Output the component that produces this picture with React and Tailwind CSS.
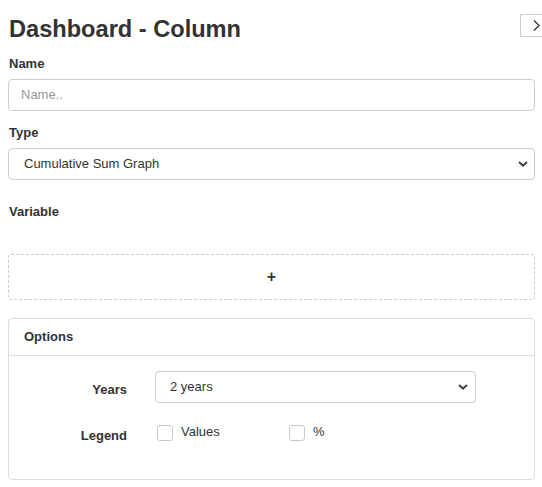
import React from "react";

function Chevron() {
  return (
    <svg width="10" height="6" viewBox="0 0 10 6" className="shrink-0">
      <path d="M1 1 L5 4.6 L9 1" fill="none" stroke="#444" strokeWidth="2" />
    </svg>
  );
}

function Checkbox() {
  return <span className="inline-block w-[16px] h-[16px] border border-[#c8c8c8] rounded-[3px] bg-white" />;
}

export default function App() {
  return (
    <div className="w-[542px] h-[487px] bg-white text-[#333] overflow-hidden relative" style={{ fontFamily: '"Liberation Sans", Arial, sans-serif' }}>
      <button className="absolute left-[520px] top-[14px] w-[30px] h-[23px] border border-[#ccc] bg-white flex items-center pl-[12px]">
        <svg width="7" height="11" viewBox="0 0 7 11">
          <path d="M1 0.5 L6 5.5 L1 10.5" fill="none" stroke="#333" strokeWidth="1.3" />
        </svg>
      </button>
      <div className="pl-[8px] pr-[7px]">
        <h1 className="text-[23.6px] font-bold leading-[28px] pt-[15px] pl-[1px] text-[#333]">Dashboard - Column</h1>

        <div className="mt-[13px] text-[13px] font-bold leading-[15px] pl-[1px]">Name</div>
        <div className="mt-[8px] h-[32px] border border-[#ccc] rounded-[4px] flex items-center pl-[12px] text-[13px] text-[#999]">Name..</div>

        <div className="mt-[14px] text-[13px] font-bold leading-[15px] pl-[1px]">Type</div>
        <div className="mt-[8px] h-[32px] border border-[#ccc] rounded-[4px] flex items-center justify-between pl-[15px] pr-[6px] text-[13px] text-[#333]">
          <span>Cumulative Sum Graph</span>
          <Chevron />
        </div>

        <div className="mt-[24px] text-[13px] font-bold leading-[15px] pl-[1px]">Variable</div>

        <div className="mt-[35px] h-[46px] border border-dashed border-[#ccc] rounded-[3px] flex items-center justify-center">
          <span className="text-[16px] font-bold text-[#333] leading-none">+</span>
        </div>

        <div className="mt-[18px] h-[162px] border border-[#ddd] rounded-[4px]">
          <div className="h-[37px] border-b border-[#ddd] flex items-center pl-[15px] text-[13px] font-bold text-[#333]">Options</div>
          <div className="pt-[15px]">
            <div className="flex items-center h-[31px]">
              <div className="w-[118px] text-right text-[13px] font-bold pt-[6px]">Years</div>
              <div className="ml-[28px] w-[321px] h-[32px] border border-[#ccc] rounded-[4px] flex items-center justify-between pl-[14px] pr-[7px] text-[13px] text-[#333]">
                <span>2 years</span>
                <Chevron />
              </div>
            </div>
            <div className="flex items-center mt-[21px] h-[20px]">
              <div className="w-[118px] text-right text-[13px] font-bold pt-[6px]">Legend</div>
              <div className="ml-[30px] flex items-center w-[132px]">
                <Checkbox />
                <span className="ml-[8px] text-[13px] -mt-[2px]">Values</span>
              </div>
              <div className="flex items-center">
                <Checkbox />
                <span className="ml-[8px] text-[13px] -mt-[2px]">%</span>
              </div>
            </div>
          </div>
        </div>
      </div>
    </div>
  );
}
